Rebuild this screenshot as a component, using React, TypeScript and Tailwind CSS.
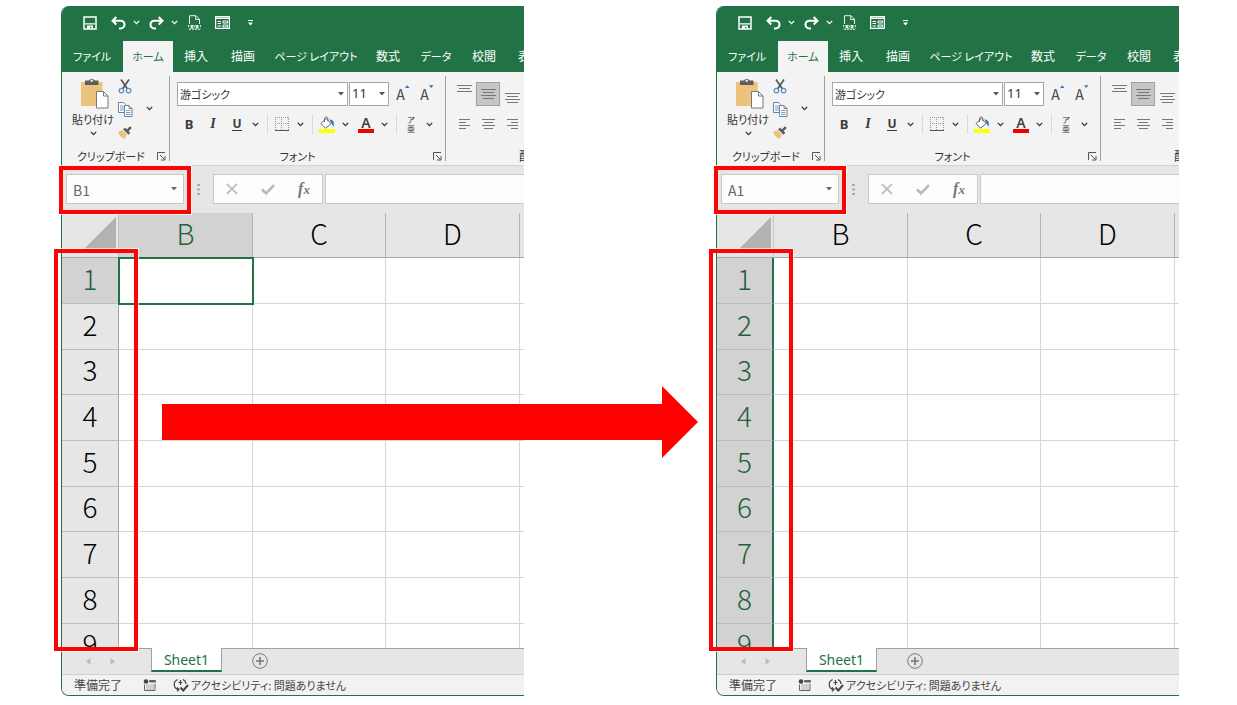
import type { ReactNode } from "react";

const uiFont = "font-['Noto_Sans_CJK_JP',sans-serif] [font-feature-settings:'palt']";

type Selection = "cell" | "column";

function Chevron({ light = false }: { light?: boolean }) {
  return (
    <svg width="7" height="5" viewBox="0 0 7 5" fill="none" stroke={light ? "#fff" : "#333"} strokeWidth="1.3" aria-hidden="true">
      <path d="M.8 .9 3.5 3.6 6.2 .9" />
    </svg>
  );
}

function IconButton({ label, className = "w-6", children }: { label: string; className?: string; children: ReactNode }) {
  return (
    <button type="button" aria-label={label} className={`flex h-6 shrink-0 items-center justify-center ${className}`}>
      {children}
    </button>
  );
}

function SaveIcon() {
  return (
    <svg width="14" height="14" viewBox="0 0 14 14" aria-hidden="true">
      <path d="M1 1h12v12H1z" fill="none" stroke="#fff" strokeWidth="1.5" />
      <path d="M2 7.2h10v1.3H2zM4 9.5h6V13H8.4v-2H7v2H4z" fill="#fff" />
    </svg>
  );
}

function UndoIcon({ flip = false }: { flip?: boolean }) {
  return (
    <svg width="15" height="14" viewBox="0 0 15 14" fill="none" stroke="#fff" strokeWidth="2.1" aria-hidden="true" className={flip ? "-scale-x-100" : ""}>
      <path d="M5.3 1 1.6 4.7l3.7 3.7M2 4.7h7.600a3.900 3.900 0 0 1 0 7.800H8" />
    </svg>
  );
}

function PrintPreviewIcon() {
  return (
    <svg width="13" height="15" viewBox="0 0 13 15" fill="none" stroke="#e6f0ea" aria-hidden="true">
      <path d="M1.500 9V.7h6.500l3.500 3.500V9M7.700 .8v3.700h3.700" />
      <path d="M.6 10v3.500M12.400 10v3.500M1 14.300h11" strokeDasharray="2 1" />
      <path d="M2.500 10h8v3.500h-8z" fill="#e6f0ea" stroke="none" />
      <circle cx="6.500" cy="11.800" r="1.200" stroke="#217346" />
    </svg>
  );
}

function FormIcon() {
  return (
    <svg width="15" height="13" viewBox="0 0 15 13" fill="none" stroke="#fff" aria-hidden="true">
      <path d="M.6 .6h13.800v11.800H.6z" strokeWidth="1.2" />
      <path d="M1 2.200h13" strokeWidth="1.6" />
      <path d="M2.500 5.500h3.500M2.500 7.500h3.500M2.500 10h3.500M8 5h4.500v2H8zM8 9h4.500v2H8z" />
    </svg>
  );
}

function TitleBar() {
  return (
    <div className="flex h-[35px] items-center pb-0.5 pl-[17px]">
      <IconButton label="上書き保存">
        <SaveIcon />
      </IconButton>
      <IconButton label="元に戻す" className="ml-1 w-6">
        <UndoIcon />
      </IconButton>
      <IconButton label="元に戻す履歴" className="w-3">
        <Chevron light />
      </IconButton>
      <IconButton label="やり直し" className="ml-0.5 w-6">
        <UndoIcon flip />
      </IconButton>
      <IconButton label="やり直し履歴" className="w-3">
        <Chevron light />
      </IconButton>
      <IconButton label="印刷プレビュー" className="ml-0.5 w-6">
        <PrintPreviewIcon />
      </IconButton>
      <IconButton label="フォーム" className="ml-1 w-6">
        <FormIcon />
      </IconButton>
      <IconButton label="クイック アクセス ツール バーのカスタマイズ" className="ml-1 w-6">
        <svg width="5" height="6" viewBox="0 0 5 6" fill="#fff" aria-hidden="true">
          <path d="M0 0h5v1H0zM0 2.600h5L2.500 5.400z" />
        </svg>
      </IconButton>
    </div>
  );
}

const tabs = [
  { name: "ファイル", width: "w-[62px] text-[11px]" },
  { name: "ホーム", width: "w-[50px] text-[11px]" },
  { name: "挿入", width: "w-[46px] text-[12px]" },
  { name: "描画", width: "w-[48px] text-[12px]" },
  { name: "ページ レイアウト", width: "w-[98px] text-[11px]" },
  { name: "数式", width: "w-[46px] text-[12px]" },
  { name: "データ", width: "w-[50px] text-[11px]" },
  { name: "校閲", width: "w-[46px] text-[12px]" },
  { name: "表示", width: "w-[46px] text-[12px]" },
];

function RibbonTabs() {
  return (
    <nav className="flex h-[31px] overflow-hidden">
      {tabs.map((tab) => (
        <button
          key={tab.name}
          type="button"
          className={`flex shrink-0 items-center justify-center pb-0.5 leading-4 whitespace-nowrap ${tab.width} ${
            tab.name === "ホーム" ? "bg-[#f3f3f3] text-[#217346]" : "text-white"
          }`}
        >
          {tab.name}
        </button>
      ))}
    </nav>
  );
}

function Launcher({ label }: { label: string }) {
  return (
    <button type="button" aria-label={label} className="flex size-4 items-center justify-center">
      <svg width="9" height="9" viewBox="0 0 9 9" fill="none" stroke="#555" aria-hidden="true">
        <path d="M.5 8V.5H8M3 3l4.500 4.500M8 4v4H4" />
      </svg>
    </button>
  );
}

function PasteIcon() {
  return (
    <svg width="28" height="31" viewBox="0 0 28 31" aria-hidden="true" className="ml-1">
      <path d="M0 4h21.500v24H0z" fill="#ecc27c" />
      <path d="M4 2.500h4a3 3 0 0 1 5.500 0h4V7H4z" fill="#5e5e5e" />
      <circle cx="10.700" cy="2.800" r="1.200" fill="#f3f3f3" />
      <path d="M15.500 13.500h7l4.500 4.500v12H15.500z" fill="#fff" stroke="#777" />
      <path d="M22.500 13.500V18H27" fill="none" stroke="#777" />
    </svg>
  );
}

function CutIcon() {
  return (
    <svg width="14" height="15" viewBox="0 0 14 15" fill="none" aria-hidden="true">
      <path d="M3 .5 9.500 10M11 .5 4.500 10" stroke="#555" strokeWidth="1.700" />
      <circle cx="3.400" cy="11.600" r="2.300" stroke="#5a8fc4" strokeWidth="1.200" />
      <circle cx="10.600" cy="11.600" r="2.300" stroke="#5a8fc4" strokeWidth="1.200" />
    </svg>
  );
}

function CopyIcon() {
  return (
    <svg width="15" height="15" viewBox="0 0 15 15" fill="#fff" stroke="#6f8296" aria-hidden="true">
      <path d="M.5 .5h5l2 2v8h-7z" />
      <path d="M2 4h4M2 6h4M2 8h4" stroke="#6a9fd0" />
      <path d="M6.500 3.500h4.500l3 3v8H6.500z" />
      <path d="M11 3.500v3h3" fill="none" />
      <path d="M8 8.500h4.500M8 10.500h4.500M8 12.500h4.500" stroke="#6a9fd0" />
    </svg>
  );
}

function BrushIcon() {
  return (
    <svg width="14" height="13" viewBox="0 0 14 13" aria-hidden="true">
      <path d="M0 5.800 4.500 4 9 8.500 6.500 13C3 12 1 9 0 5.800z" fill="#ecc27c" />
      <path d="M5 3.200 7 1.700l2 1.600L12 .3l1.800 1.700-3.100 3 1.500 2-1.700 1.800z" fill="#5e5e5e" />
    </svg>
  );
}

function ClipboardGroup() {
  return (
    <section aria-label="クリップボード" className="mt-1 flex h-[85px] w-[109px] shrink-0 flex-col border-r border-[#a0a0a0]">
      <div className="flex h-[72px] shrink-0 pt-0.5 pl-2">
        <button type="button" className="flex w-12 shrink-0 flex-col items-center text-[11px] leading-4 text-[#333]">
          <PasteIcon />
          <span className="mt-0.5 whitespace-nowrap">貼り付け</span>
          <span className="mt-1">
            <Chevron />
          </span>
        </button>
        <div className="flex flex-col -space-y-px">
          <IconButton label="切り取り" className="-mt-1 w-4">
            <CutIcon />
          </IconButton>
          <IconButton label="コピー" className="w-4">
            <CopyIcon />
          </IconButton>
          <IconButton label="書式のコピー/貼り付け" className="w-4">
            <BrushIcon />
          </IconButton>
        </div>
        <IconButton label="コピーのオプション" className="mt-[18px] ml-2.5 w-3">
          <Chevron />
        </IconButton>
      </div>
      <div className="flex h-4 shrink-0 items-center justify-between pl-4">
        <span className="text-[11px] leading-4 whitespace-nowrap text-[#333]">クリップボード</span>
        <Launcher label="クリップボードの設定" />
      </div>
    </section>
  );
}

function Combo({ label, value, className }: { label: string; value: string; className: string }) {
  return (
    <div className={`relative h-6 shrink-0 ${className}`}>
      <select aria-label={label} defaultValue={value} className="block h-full w-full appearance-none border border-[#a6a6a6] bg-white pl-[2px] text-[#333]">
        <option>{value}</option>
      </select>
      <svg width="6" height="4" viewBox="0 0 6 4" fill="#555" aria-hidden="true" className="pointer-events-none absolute top-2.5 right-1">
        <path d="M0 0h6L3 3.500z" />
      </svg>
    </div>
  );
}

function Separator() {
  return <div className="mr-0.5 ml-1.5 h-5 w-px shrink-0 bg-[#d8d8d8]" />;
}

function FontSizeIcon({ grow = false }: { grow?: boolean }) {
  return (
    <span className="flex items-start text-[14px] leading-5 text-[#444]">
      A
      <svg width="5" height="4" viewBox="0 0 5 4" fill="#2f74b5" aria-hidden="true" className="mt-px">
        <path d={grow ? "M0 3h4.500L2.200 .3z" : "M0 .3h4.500L2.200 3z"} />
      </svg>
    </span>
  );
}

function FontGroup() {
  return (
    <section aria-label="フォント" className="mt-1 flex h-[85px] w-[276px] shrink-0 flex-col border-r border-[#a0a0a0]">
      <div className="flex h-[72px] shrink-0 flex-col pt-1.5 pl-[7px]">
        <div className="flex">
          <Combo label="フォント名" value="游ゴシック" className="w-[171px] text-[11px]" />
          <Combo label="フォント サイズ" value="11" className="ml-px w-10 font-['Noto_Sans',sans-serif] text-[13px]" />
          <IconButton label="フォント サイズの拡大" className="ml-0.5 w-6">
            <FontSizeIcon grow />
          </IconButton>
          <IconButton label="フォント サイズの縮小">
            <FontSizeIcon />
          </IconButton>
        </div>
        <div className="mt-1.5 flex items-center text-[13px] leading-4 text-[#3b3b3b]">
          <IconButton label="太字">
            <b className="font-['Noto_Sans',sans-serif]">B</b>
          </IconButton>
          <IconButton label="斜体">
            <b className="font-['Liberation_Serif',serif] text-[14px] italic">I</b>
          </IconButton>
          <IconButton label="下線">
            <b className="border-b border-[#3b3b3b] font-['Noto_Sans',sans-serif] text-[12px] leading-3">U</b>
          </IconButton>
          <IconButton label="下線のオプション" className="w-3">
            <Chevron />
          </IconButton>
          <Separator />
          <IconButton label="罫線">
            <svg width="14" height="14" viewBox="0 0 14 14" fill="none" stroke="#999" aria-hidden="true">
              <path d="M0 .5h14M.5 0v14M13.500 0v14M6.500 0v14M0 6.500h14" strokeDasharray="1 1" />
              <path d="M0 13.500h14" stroke="#555" />
            </svg>
          </IconButton>
          <IconButton label="罫線のオプション" className="w-3">
            <Chevron />
          </IconButton>
          <Separator />
          <IconButton label="塗りつぶしの色">
            <svg width="16" height="17" viewBox="0 0 16 17" fill="none" aria-hidden="true">
              <path d="M2 7.500 7.500 2.500l4.500 5.200-5.500 4.500z" fill="#fff" stroke="#666" />
              <path d="M5.500 6V2.300a1.700 1.700 0 0 1 3.300 0V5" stroke="#666" />
              <path d="M10.500 3.500c3.500 0 5 2 4.200 7.500-1-2-1.600-3-2.300-3.500z" fill="#2f74b5" />
              <path d="M0 13h16v4H0z" fill="#ff0" />
            </svg>
          </IconButton>
          <IconButton label="塗りつぶしの色のオプション" className="w-3">
            <Chevron />
          </IconButton>
          <IconButton label="フォントの色" className="ml-[3px] w-6">
            <span className="flex w-4 flex-col items-center border-b-4 border-[#f00000] font-['Noto_Sans',sans-serif] text-[14px] leading-[13px] font-semibold text-[#444]">A</span>
          </IconButton>
          <IconButton label="フォントの色のオプション" className="w-3">
            <Chevron />
          </IconButton>
          <Separator />
          <IconButton label="ふりがな">
            <span className="flex flex-col items-center text-[8px] leading-[9px] text-[#333]">
              <span>ア</span>
              <span>亜</span>
            </span>
          </IconButton>
          <IconButton label="ふりがなのオプション" className="w-3">
            <Chevron />
          </IconButton>
        </div>
      </div>
      <div className="grid h-4 shrink-0 grid-cols-[1fr_16px] items-center">
        <span className="pr-1 text-center text-[11px] leading-4 text-[#333]">フォント</span>
        <Launcher label="フォントの設定" />
      </div>
    </section>
  );
}

const alignments = [
  { label: "上揃え", path: "M0 .5h15M2 3.500h11M0 6.500h15", box: "items-start pt-[3px]" },
  { label: "上下中央揃え", path: "M0 .5h15M2 3.500h11M0 6.500h15M2 9.500h11", box: "items-center border border-[#a0a0a0] bg-[#c6c6c6]" },
  { label: "下揃え", path: "M0 .5h15M2 3.500h11M0 6.500h15M2 9.500h11", box: "items-end pb-[3px]" },
  { label: "左揃え", path: "M2 .5h11M2 3.500h7M2 6.500h11M2 9.500h7", box: "items-center" },
  { label: "中央揃え", path: "M1 .5h13M3 3.500h9M1 6.500h13M3 9.500h9", box: "items-center" },
  { label: "右揃え", path: "M2 .5h11M6 3.500h7M2 6.500h11M6 9.500h7", box: "items-center" },
];

function AlignmentGroup() {
  return (
    <section aria-label="配置" className="mt-1 flex h-[85px] shrink-0 flex-col">
      <div className="grid h-[72px] shrink-0 grid-cols-[24px_24px_24px] content-start gap-y-1.5 pt-1.5 pl-1.5">
        {alignments.map((item) => (
          <button key={item.label} type="button" aria-label={item.label} className={`flex h-6 justify-center ${item.box}`}>
            <svg width="15" height="10" viewBox="0 0 15 10" stroke="#777" aria-hidden="true">
              <path d={item.path} />
            </svg>
          </button>
        ))}
      </div>
      <span className="shrink-0 pl-[73px] text-[12px] leading-4 text-[#333]">配置</span>
    </section>
  );
}

function FormulaBar({ address }: { address: string }) {
  return (
    <div className="flex h-12 items-center border-t border-[#d2d2d2] bg-[#e6e6e6] pb-px pl-1">
      <div className="relative h-[30px] w-[118px] shrink-0">
        <input aria-label="名前ボックス" defaultValue={address} className="block h-full w-full border border-[#c8c8c8] bg-[#fdfdfd] pt-0.5 pl-1.5 text-[14px] text-[#666]" />
        <svg width="6" height="4" viewBox="0 0 6 4" fill="#666" aria-hidden="true" className="pointer-events-none absolute top-[13px] right-[7px]">
          <path d="M0 0h6L3 3.500z" />
        </svg>
      </div>
      <svg width="3" height="11" viewBox="0 0 3 11" fill="#aaa" aria-hidden="true" className="ml-[13px] shrink-0">
        <path d="M0 0h3v2H0zM0 4.500h3v2H0zM0 9h3v2H0z" />
      </svg>
      <div className="ml-[13px] flex h-[30px] w-[110px] shrink-0 items-center border border-[#c8c8c8] bg-[#fdfdfd]">
        <IconButton label="キャンセル" className="w-9">
          <svg width="12" height="12" viewBox="0 0 12 12" stroke="#c0c0c0" strokeWidth="1.800" aria-hidden="true">
            <path d="M.8 .8 11 11M11 .8 .8 11" />
          </svg>
        </IconButton>
        <IconButton label="入力" className="w-9">
          <svg width="14" height="11" viewBox="0 0 14 11" fill="none" stroke="#b8b8b8" strokeWidth="2.600" aria-hidden="true">
            <path d="M1 5.500 5 9.300 13 1.200" />
          </svg>
        </IconButton>
        <IconButton label="関数の挿入" className="w-9">
          <span className="font-['Liberation_Serif',serif] text-[16px] leading-5 font-bold text-[#777] italic">
            f<span className="text-[13px]">x</span>
          </span>
        </IconButton>
      </div>
      <input aria-label="数式バー" className="ml-0.5 h-[30px] min-w-0 flex-1 border-y border-l border-[#c8c8c8] bg-[#fdfdfd] px-2 text-[14px]" />
    </div>
  );
}

const columns = ["B", "C", "D"];
const rows = [1, 2, 3, 4, 5, 6, 7, 8, 9];

function Grid({ selection }: { selection: Selection }) {
  const wholeColumn = selection === "column";
  return (
    <div className="h-[435px] overflow-hidden">
      <table className="w-full table-fixed border-separate border-spacing-0">
        <colgroup>
          <col className="w-[57px]" />
          <col className="w-[134px]" />
          <col className="w-[133px]" />
          <col className="w-[134px]" />
          <col />
        </colgroup>
        <thead>
          <tr className="h-[45px]">
            <th aria-label="すべて選択" className="border-b border-[#a6a6a6] bg-[#e6e6e6] p-0">
              <svg width="57" height="44" viewBox="0 0 57 44" aria-hidden="true" className="block">
                <path d="M54 4v36H18z" fill="#b2b2b2" />
                <path d="M56.500 2v42" stroke="#c4c4c4" />
              </svg>
            </th>
            {columns.map((name) => {
              const active = name === "B" && !wholeColumn;
              return (
                <th
                  key={name}
                  scope="col"
                  className={`border-r border-b border-r-[#b4b4b4] border-b-[#a6a6a6] px-0 pt-0 pb-1 text-[28px] leading-9 font-light ${
                    active ? "bg-[#d2d2d2] text-[#1f5f3c]" : "bg-[#e6e6e6] text-black"
                  }`}
                >
                  {name}
                </th>
              );
            })}
            <th aria-label="E" className="border-b border-[#a6a6a6] bg-[#e6e6e6] p-0" />
          </tr>
        </thead>
        <tbody>
          {rows.map((row) => {
            const active = wholeColumn || row === 1;
            return (
              <tr key={row} className="h-[46px] nth-[3n]:h-[45px]">
                <th
                  scope="row"
                  className={`border-b border-b-[#bcbcbc] px-0 pt-0 pb-1.5 text-[28px] leading-9 font-light ${
                    active ? "bg-[#d2d2d2] text-[#1f5f3c]" : "bg-[#e6e6e6] text-black"
                  } ${wholeColumn ? "border-r-2 border-r-[#217346]" : "border-r border-r-[#a6a6a6]"}`}
                >
                  {row}
                </th>
                {columns.map((name) => (
                  <td
                    key={name}
                    className={`border-r border-b border-[#d6d6d6] bg-white p-0 ${
                      !wholeColumn && row === 1 && name === "B" ? "outline-2 -outline-offset-1 outline-[#217346]" : ""
                    }`}
                  />
                ))}
                <td className="border-b border-[#d6d6d6] bg-white p-0" />
              </tr>
            );
          })}
        </tbody>
      </table>
    </div>
  );
}

function SheetTabs() {
  return (
    <div className="flex h-[26px] items-start border-t border-[#a0a0a0] bg-[#e6e6e6] pl-3.5">
      <IconButton label="前のシート" className="w-6">
        <svg width="5" height="7" viewBox="0 0 5 7" fill="#bdbdbd" aria-hidden="true">
          <path d="M4.500 0v7L0 3.500z" />
        </svg>
      </IconButton>
      <IconButton label="次のシート" className="w-6">
        <svg width="5" height="7" viewBox="0 0 5 7" fill="#bdbdbd" aria-hidden="true">
          <path d="M.5 0v7L5 3.500z" />
        </svg>
      </IconButton>
      <button
        type="button"
        className="-mt-px ml-[27px] h-6 w-[71px] shrink-0 border-x border-b-2 border-x-[#a0a0a0] border-b-[#217346] bg-white pt-0.5 font-['Noto_Sans',sans-serif] text-[14px] leading-5 text-[#217346]"
      >
        Sheet1
      </button>
      <IconButton label="新しいシート" className="ml-[26px] w-6">
        <svg width="16" height="16" viewBox="0 0 16 16" fill="none" stroke="#777" aria-hidden="true">
          <circle cx="8" cy="8" r="7.300" />
          <path d="M8 4v8M4 8h8" strokeWidth="1.600" />
        </svg>
      </IconButton>
    </div>
  );
}

function StatusBar() {
  return (
    <footer className="flex h-[21px] items-center border-t border-[#cfcfcf] bg-[#f2f2f2] pb-px pl-3 text-[12px] leading-4 whitespace-nowrap text-[#444]">
      <span>準備完了</span>
      <IconButton label="マクロの記録" className="ml-[15px] w-6">
        <svg width="13" height="12" viewBox="0 0 13 12" fill="none" stroke="#666" aria-hidden="true">
          <path d="M1.500 5.500v6h10.500v-7" />
          <path d="M6.500 1.500h6v1.500h-6z" fill="#555" />
          <path d="M3.500 6h7M3.500 8h7M3.500 10h7" strokeDasharray="1 1" />
          <circle cx="3" cy="2.500" r="2.300" fill="#444" stroke="none" />
        </svg>
      </IconButton>
      <button type="button" className="ml-3 flex items-center gap-0.5 text-[11px]">
        <svg width="16" height="14" viewBox="0 0 16 14" fill="none" stroke="#444" strokeWidth="1.200" aria-hidden="true">
          <path d="M4.500 1.500C-.5 4 .5 10.500 5.500 11.500M4 9.500l2 2-2 1.700M10 1.500c2 1 3 2.500 3 4.500M7.500 2v5M5.500 4.500h4" />
          <path d="M7.500 9.500l2.800 3L15 7" strokeWidth="2" />
        </svg>
        <span>アクセシビリティ: 問題ありません</span>
      </button>
    </footer>
  );
}

function Highlight({ className }: { className: string }) {
  return <div aria-hidden="true" className={`pointer-events-none absolute border-4 border-[#fa0505] ring-1 ring-white/70 ${className}`} />;
}

function SpreadsheetWindow({ address, selection }: { address: string; selection: Selection }) {
  return (
    <div className="relative min-w-0 flex-1">
      <div className="overflow-hidden rounded-l-lg border-b border-l border-[#217346] bg-white">
        <header className="bg-[#217346]">
          <div className="-ml-px">
            <TitleBar />
            <RibbonTabs />
          </div>
        </header>
        <div className="-ml-px flex h-[93px] overflow-hidden border-l border-[#217346] bg-[#f3f3f3]">
          <div className="-ml-px flex items-start">
            <ClipboardGroup />
            <FontGroup />
            <AlignmentGroup />
          </div>
        </div>
        <FormulaBar address={address} />
        <Grid selection={selection} />
        <SheetTabs />
        <StatusBar />
      </div>
      <Highlight className="top-40 -left-0.5 h-12 w-[132px]" />
      <Highlight className="top-[243px] -left-[7px] h-[402px] w-[84px]" />
    </div>
  );
}

export default function App() {
  return (
    <main className={`flex min-h-screen items-start bg-white pt-1.5 pr-[58px] pl-[61px] ${uiFont}`}>
      <SpreadsheetWindow address="B1" selection="cell" />
      <div className="relative z-10 w-48 shrink-0 self-stretch">
        <div aria-hidden="true" className="absolute top-[380px] right-[18px] -left-[362px] flex h-[72px] items-center">
          <div className="h-9 flex-1 bg-[#ff0000]" />
          <svg width="36" height="72" viewBox="0 0 36 72" fill="#f00">
            <path d="M0 0 36 36 0 72z" />
          </svg>
        </div>
      </div>
      <SpreadsheetWindow address="A1" selection="column" />
    </main>
  );
}
